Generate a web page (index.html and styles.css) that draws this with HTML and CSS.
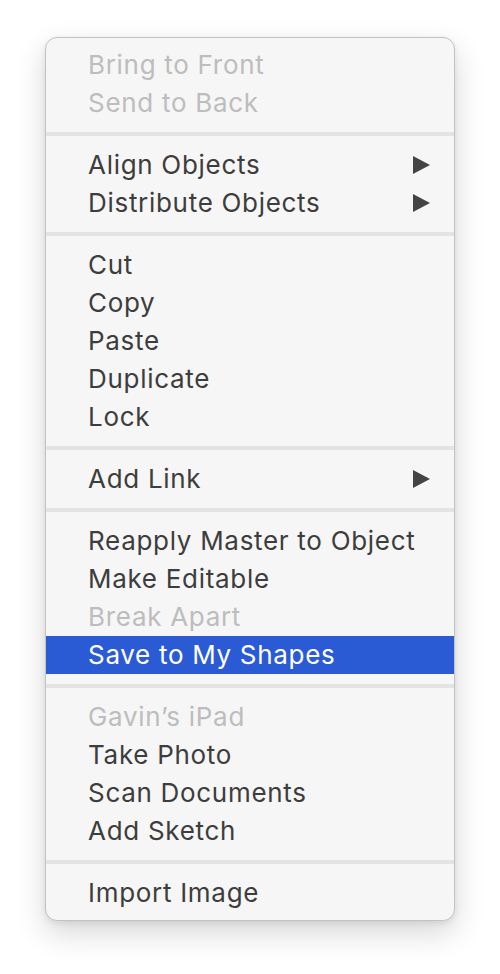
FILE: index.html
```html
<!DOCTYPE html>
<html>
<head>
<meta charset="utf-8">
<link rel="stylesheet" href="styles.css">
</head>
<body>
<div class="menu">
  <div class="item disabled">Bring to Front</div>
  <div class="item disabled">Send to Back</div>
  <div class="sep"></div>
  <div class="item sub">Align Objects<svg class="arrow" viewBox="0 0 17 20"><polygon points="0,1 17,10 0,19"/></svg></div>
  <div class="item sub">Distribute Objects<svg class="arrow" viewBox="0 0 17 20"><polygon points="0,1 17,10 0,19"/></svg></div>
  <div class="sep"></div>
  <div class="item">Cut</div>
  <div class="item">Copy</div>
  <div class="item">Paste</div>
  <div class="item">Duplicate</div>
  <div class="item">Lock</div>
  <div class="sep"></div>
  <div class="item sub">Add Link<svg class="arrow" viewBox="0 0 17 20"><polygon points="0,1 17,10 0,19"/></svg></div>
  <div class="sep"></div>
  <div class="item">Reapply Master to Object</div>
  <div class="item">Make Editable</div>
  <div class="item disabled">Break Apart</div>
  <div class="item selected">Save to My Shapes</div>
  <div class="sep"></div>
  <div class="item disabled">Gavin’s iPad</div>
  <div class="item">Take Photo</div>
  <div class="item">Scan Documents</div>
  <div class="item">Add Sketch</div>
  <div class="sep"></div>
  <div class="item">Import Image</div>
</div>
</body>
</html>
```
FILE: styles.css
```css
html, body {
  margin: 0;
  padding: 0;
  background: #ffffff;
}
body {
  width: 500px;
  height: 974px;
  overflow: hidden;
}
.menu {
  margin: 37px 0 0 45px;
  width: 408px;
  padding: 8px 0 8px;
  background: #f6f6f6;
  border: 1px solid #c2c2c2;
  border-radius: 12px;
  box-shadow: 0 12px 30px rgba(0, 0, 0, 0.16), 0 2px 6px rgba(0, 0, 0, 0.08);
  font-family: "Inter", "Noto Sans", sans-serif;
  font-size: 26px;
  letter-spacing: 0.7px;
  color: #3d3d3d;
}
.item {
  height: 38px;
  line-height: 38px;
  padding-left: 42px;
  padding-right: 24px;
  display: flex;
  align-items: center;
  justify-content: space-between;
  white-space: nowrap;
}
.item.disabled {
  color: #bdbdbd;
}
.item.selected {
  background: #2a5bd4;
  color: #ffffff;
}
.arrow {
  width: 17px;
  height: 20px;
  fill: #444444;
}
.sep {
  height: 4px;
  margin: 10px 0;
  background: #e3e3e3;
}
```
